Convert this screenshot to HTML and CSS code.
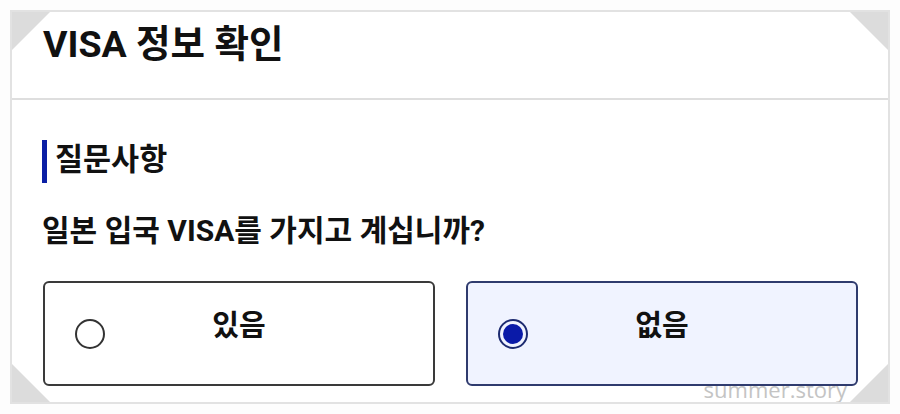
FILE: index.html
```html
<!DOCTYPE html>
<html lang="ko">
<head>
<meta charset="utf-8">
<link rel="stylesheet" href="styles.css">
</head>
<body>
<div class="card">
  <span class="corner tl"></span>
  <span class="corner tr"></span>
  <span class="corner bl"></span>
  <span class="corner br"></span>
  <header class="head"><h1 class="title">VISA 정보 확인</h1></header>
  <section class="content">
    <h2 class="section-title">질문사항</h2>
    <p class="question">일본 입국 VISA를 가지고 계십니까?</p>
    <div class="options">
      <div class="option">
        <span class="radio"></span>
        <span class="label">있음</span>
      </div>
      <div class="option selected">
        <span class="radio"></span>
        <span class="label">없음</span>
      </div>
    </div>
  </section>
  <span class="watermark">summer.story</span>
</div>
</body>
</html>
```

FILE: styles.css
```css
* { box-sizing: border-box; }
html, body { margin: 0; padding: 0; }
body {
  background: #fdfdfd;
  font-family: Roboto, "Noto Sans CJK KR", sans-serif;
  color: #111;
  width: 900px;
  height: 414px;
  overflow: hidden;
}
.card {
  position: relative;
  margin: 10px 0 0 10px;
  width: 880px;
  height: 394px;
  border: 2px solid #e2e2e2;
  background: #fff;
  overflow: hidden;
}
.corner {
  position: absolute;
  width: 38px;
  height: 38px;
  background: #dcdcdc;
  z-index: 3;
}
.corner.tl { top: 0; left: 0; clip-path: polygon(0 0, 100% 0, 0 100%); }
.corner.tr { top: 0; right: 0; clip-path: polygon(0 0, 100% 0, 100% 100%); }
.corner.bl { bottom: 0; left: 0; clip-path: polygon(0 0, 100% 100%, 0 100%); }
.corner.br { bottom: 0; right: 0; clip-path: polygon(100% 0, 100% 100%, 0 100%); }
.head {
  height: 88px;
  border-bottom: 2px solid #dedede;
  display: flex;
  align-items: center;
  padding-left: 31px;
}
.title {
  margin: 0;
  font-size: 37.5px;
  font-weight: 700;
  line-height: 44px;
  margin-top: -23px;
}
.content {
  padding: 40px 29px 0 30px;
}
.section-title {
  margin: 0;
  height: 43px;
  border-left: 5px solid #0b1fa5;
  padding-left: 8px;
  display: flex;
  align-items: center;
  font-size: 30.5px;
  font-weight: 700;
  line-height: 40px;
  padding-bottom: 3px;
}
.question {
  margin: 29px 0 0 0;
  font-size: 30px;
  font-weight: 700;
  line-height: 38px;
}
.options {
  display: grid;
  grid-template-columns: 392px 392px;
  column-gap: 31px;
  margin-top: 31px;
  margin-left: 1px;
}
.option {
  position: relative;
  z-index: 2;
  height: 105px;
  border: 2px solid #3a3a3a;
  border-radius: 6px;
  background: #fff;
  display: flex;
  align-items: center;
  justify-content: center;
}
.option.selected {
  background: #f0f3ff;
  border-color: #2f3b6e;
}
.radio {
  position: absolute;
  left: 30px;
  top: 50%;
  width: 30px;
  height: 30px;
  margin-top: -15px;
  border: 2px solid #333;
  border-radius: 50%;
  background: #fff;
}
.option.selected .radio {
  border-color: #1c2a70;
  background: #f0f3ff;
}
.option.selected .radio::after {
  content: "";
  position: absolute;
  left: 3px;
  top: 3px;
  width: 20px;
  height: 20px;
  border-radius: 50%;
  background: #0a1aa8;
}
.label {
  font-size: 29px;
  font-weight: 700;
  line-height: 34px;
  margin-top: -16px;
}
.watermark {
  position: absolute;
  right: 41px;
  bottom: 1px;
  font-family: "Open Sans", sans-serif;
  font-size: 22px;
  line-height: 24px;
  color: #c4c4c4;
  z-index: 1;
}
```
